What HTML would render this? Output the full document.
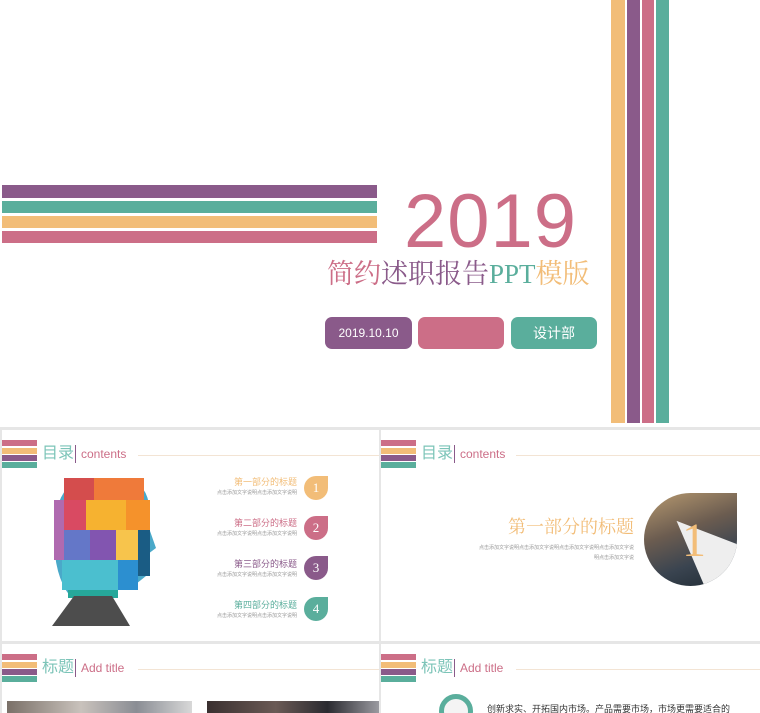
<!DOCTYPE html>
<html><head><meta charset="utf-8"><style>
*{margin:0;padding:0;box-sizing:border-box}
html,body{width:760px;height:713px;overflow:hidden}
body{background:#e6e6e6;position:relative;font-family:"Liberation Sans","Noto Sans CJK SC",sans-serif}
.a{position:absolute}
.s{position:absolute;background:#fff;overflow:hidden}
.cn{font-family:"Liberation Serif","Noto Serif CJK SC",serif}
</style></head><body>
<div class="s" style="left:0;top:0;width:760px;height:427px">
 <div class="a" style="left:2px;top:185px;width:375px;height:13px;background:#8a5a8a"></div>
 <div class="a" style="left:2px;top:201px;width:375px;height:12px;background:#5aae9c"></div>
 <div class="a" style="left:2px;top:216px;width:375px;height:12px;background:#f2bd78"></div>
 <div class="a" style="left:2px;top:231px;width:375px;height:12px;background:#cc6e87"></div>
 <div class="a" style="left:611px;top:0;width:14px;height:423px;background:#f2bd78"></div>
 <div class="a" style="left:627px;top:0;width:13px;height:423px;background:#8a5a8a"></div>
 <div class="a" style="left:642px;top:0;width:12px;height:423px;background:#cc6e87"></div>
 <div class="a" style="left:656px;top:0;width:13px;height:423px;background:#5aae9c"></div>
 <div class="a" style="left:404px;top:178px;font-size:76px;color:#cc6e87;line-height:88px;letter-spacing:1px">2019</div>
 <div class="a cn" style="left:327px;top:256px;font-size:27px;line-height:36px;white-space:nowrap"><span style="color:#cc6e87">简约</span><span style="color:#8a5a8a">述职报告</span><span style="color:#5aae9c">PPT</span><span style="color:#f2bd78">模版</span></div>
 <div class="a" style="left:325px;top:317px;width:87px;height:32px;border-radius:7px;background:#8a5a8a;color:#fff;font-size:12px;text-align:center;line-height:32px">2019.10.10</div>
 <div class="a" style="left:418px;top:317px;width:86px;height:32px;border-radius:7px;background:#cc6e87"></div>
 <div class="a" style="left:511px;top:317px;width:86px;height:32px;border-radius:7px;background:#5aae9c;color:#fff;font-size:14px;text-align:center;line-height:32px">设计部</div>
</div>

<!-- tile 1 -->
<div class="s" style="left:2px;top:430px;width:377px;height:211px">
 <div class="a" style="left:0;top:10px;width:35px;height:6px;background:#cc6e87"></div>
 <div class="a" style="left:0;top:18px;width:35px;height:6px;background:#f2bd78"></div>
 <div class="a" style="left:0;top:25px;width:35px;height:6px;background:#8a5a8a"></div>
 <div class="a" style="left:0;top:32px;width:35px;height:6px;background:#5aae9c"></div>
 <div class="a" style="left:40px;top:14px;font-size:16px;color:#7cc4b8;line-height:20px">目录</div>
 <div class="a" style="left:73px;top:15px;width:1px;height:18px;background:#8a5a8a"></div>
 <div class="a" style="left:79px;top:17px;font-size:12px;color:#cc6e87">contents</div>
 <div class="a" style="left:136px;top:25px;width:241px;height:1px;background:#f3e4d4"></div>
 <svg class="a" style="left:50px;top:46px" width="108" height="150" viewBox="0 0 108 150">
  <path d="M32 2 L72 2 Q98 6 98 40 L98 55 L104 72 L96 78 L94 100 L84 108 L70 108 L60 120 L18 120 Q2 100 2 60 Q2 10 32 2Z" fill="#4aa9c9"/>
  <rect x="12" y="2" width="30" height="22" fill="#d44d4d"/>
  <rect x="42" y="2" width="50" height="22" fill="#ef7a3a"/>
  <rect x="12" y="24" width="22" height="30" fill="#d94a62"/>
  <rect x="34" y="24" width="40" height="30" fill="#f6b230"/>
  <rect x="74" y="24" width="24" height="30" fill="#f5922b"/>
  <rect x="2" y="24" width="10" height="60" fill="#b06ab0"/>
  <rect x="12" y="54" width="26" height="30" fill="#6477c8"/>
  <rect x="38" y="54" width="26" height="30" fill="#8255b0"/>
  <rect x="64" y="54" width="22" height="30" fill="#f7c44c"/>
  <rect x="86" y="54" width="12" height="46" fill="#1a5c84"/>
  <rect x="10" y="84" width="56" height="30" fill="#4bbfcf"/>
  <rect x="66" y="84" width="20" height="30" fill="#2c8fd0"/>
  <rect x="16" y="114" width="50" height="8" fill="#26a89a"/>
  <path d="M22 120 L60 120 L78 150 L0 150 Z" fill="#4d4d4d"/>
 </svg>
 <div class="a" style="left:180px;top:46px;width:115px;text-align:right;font-size:9px;color:#f2bd78;line-height:12px" >第一部分的标题</div>
 <div class="a" style="left:180px;top:59px;width:115px;text-align:right;font-size:5px;color:#999">点击添加文字说明点击添加文字说明</div>
 <div class="a" style="left:180px;top:87px;width:115px;text-align:right;font-size:9px;color:#cc6e87;line-height:12px">第二部分的标题</div>
 <div class="a" style="left:180px;top:100px;width:115px;text-align:right;font-size:5px;color:#999">点击添加文字说明点击添加文字说明</div>
 <div class="a" style="left:180px;top:128px;width:115px;text-align:right;font-size:9px;color:#8a5a8a;line-height:12px">第三部分的标题</div>
 <div class="a" style="left:180px;top:141px;width:115px;text-align:right;font-size:5px;color:#999">点击添加文字说明点击添加文字说明</div>
 <div class="a" style="left:180px;top:169px;width:115px;text-align:right;font-size:9px;color:#5aae9c;line-height:12px">第四部分的标题</div>
 <div class="a" style="left:180px;top:182px;width:115px;text-align:right;font-size:5px;color:#999">点击添加文字说明点击添加文字说明</div>
 <div class="a cn" style="left:302px;top:46px;width:24px;height:24px;border-radius:12px 0 12px 12px;background:#f2bd78;color:#fff;text-align:center;line-height:24px;font-size:13px">1</div>
 <div class="a cn" style="left:302px;top:86px;width:24px;height:24px;border-radius:12px 0 12px 12px;background:#cc6e87;color:#fff;text-align:center;line-height:24px;font-size:13px">2</div>
 <div class="a cn" style="left:302px;top:126px;width:24px;height:24px;border-radius:12px 0 12px 12px;background:#8a5a8a;color:#fff;text-align:center;line-height:24px;font-size:13px">3</div>
 <div class="a cn" style="left:302px;top:167px;width:24px;height:24px;border-radius:12px 0 12px 12px;background:#5aae9c;color:#fff;text-align:center;line-height:24px;font-size:13px">4</div>
</div>

<!-- tile 2 -->
<div class="s" style="left:381px;top:430px;width:379px;height:211px">
 <div class="a" style="left:0;top:10px;width:35px;height:6px;background:#cc6e87"></div>
 <div class="a" style="left:0;top:18px;width:35px;height:6px;background:#f2bd78"></div>
 <div class="a" style="left:0;top:25px;width:35px;height:6px;background:#8a5a8a"></div>
 <div class="a" style="left:0;top:32px;width:35px;height:6px;background:#5aae9c"></div>
 <div class="a" style="left:40px;top:14px;font-size:16px;color:#7cc4b8;line-height:20px">目录</div>
 <div class="a" style="left:73px;top:15px;width:1px;height:18px;background:#8a5a8a"></div>
 <div class="a" style="left:79px;top:17px;font-size:12px;color:#cc6e87">contents</div>
 <div class="a" style="left:135px;top:25px;width:244px;height:1px;background:#f3e4d4"></div>
 <div class="a cn" style="left:100px;top:83px;width:153px;text-align:right;font-size:18px;color:#f2bd78;white-space:nowrap">第一部分的标题</div>
 <div class="a" style="left:80px;top:113px;width:173px;text-align:right;font-size:5px;color:#999;line-height:10px">点击添加文字说明点击添加文字说明点击添加文字说明点击添加文字说<br>明点击添加文字说</div>
 <div class="a" style="left:263px;top:63px;width:93px;height:93px;border-radius:50% 0 50% 50%;background:linear-gradient(160deg,#b89a70,#6b5c50 40%,#3a4450 70%,#1f2a33);overflow:hidden">
  <div class="a" style="left:0;top:0;width:93px;height:93px;background:#eeeeee;clip-path:polygon(35% 30%,100% 55%,100% 100%,65% 100%)"></div>
  <div class="a cn" style="left:38px;top:18px;font-size:48px;color:#f2bd78;line-height:60px">1</div>
 </div>
</div>

<!-- tile 3 -->
<div class="s" style="left:2px;top:644px;width:377px;height:69px">
 <div class="a" style="left:0;top:10px;width:35px;height:6px;background:#cc6e87"></div>
 <div class="a" style="left:0;top:18px;width:35px;height:6px;background:#f2bd78"></div>
 <div class="a" style="left:0;top:25px;width:35px;height:6px;background:#8a5a8a"></div>
 <div class="a" style="left:0;top:32px;width:35px;height:6px;background:#5aae9c"></div>
 <div class="a" style="left:40px;top:14px;font-size:16px;color:#7cc4b8;line-height:20px">标题</div>
 <div class="a" style="left:73px;top:15px;width:1px;height:18px;background:#8a5a8a"></div>
 <div class="a" style="left:79px;top:17px;font-size:12px;color:#cc6e87">Add title</div>
 <div class="a" style="left:136px;top:25px;width:241px;height:1px;background:#f3e4d4"></div>
 <div class="a" style="left:5px;top:57px;width:185px;height:12px;background:linear-gradient(90deg,#7a7068,#c9c2bc 40%,#8a8d94 70%,#d8d8d8)"></div>
 <div class="a" style="left:205px;top:57px;width:172px;height:12px;background:linear-gradient(90deg,#3a3030,#6a5a55 40%,#2a2a30 70%,#9a9aa0)"></div>
</div>

<!-- tile 4 -->
<div class="s" style="left:381px;top:644px;width:379px;height:69px">
 <div class="a" style="left:0;top:10px;width:35px;height:6px;background:#cc6e87"></div>
 <div class="a" style="left:0;top:18px;width:35px;height:6px;background:#f2bd78"></div>
 <div class="a" style="left:0;top:25px;width:35px;height:6px;background:#8a5a8a"></div>
 <div class="a" style="left:0;top:32px;width:35px;height:6px;background:#5aae9c"></div>
 <div class="a" style="left:40px;top:14px;font-size:16px;color:#7cc4b8;line-height:20px">标题</div>
 <div class="a" style="left:73px;top:15px;width:1px;height:18px;background:#8a5a8a"></div>
 <div class="a" style="left:79px;top:17px;font-size:12px;color:#cc6e87">Add title</div>
 <div class="a" style="left:135px;top:25px;width:244px;height:1px;background:#f3e4d4"></div>
 <div class="a" style="left:58px;top:50px;width:34px;height:34px;border-radius:50%;border:5px solid #5aae9c;background:#f4f4f4"></div>
 <div class="a" style="left:106px;top:58px;font-size:9px;color:#333;white-space:nowrap">创新求实、开拓国内市场。产品需要市场，市场更需要适合的</div>
</div>
</body></html>
